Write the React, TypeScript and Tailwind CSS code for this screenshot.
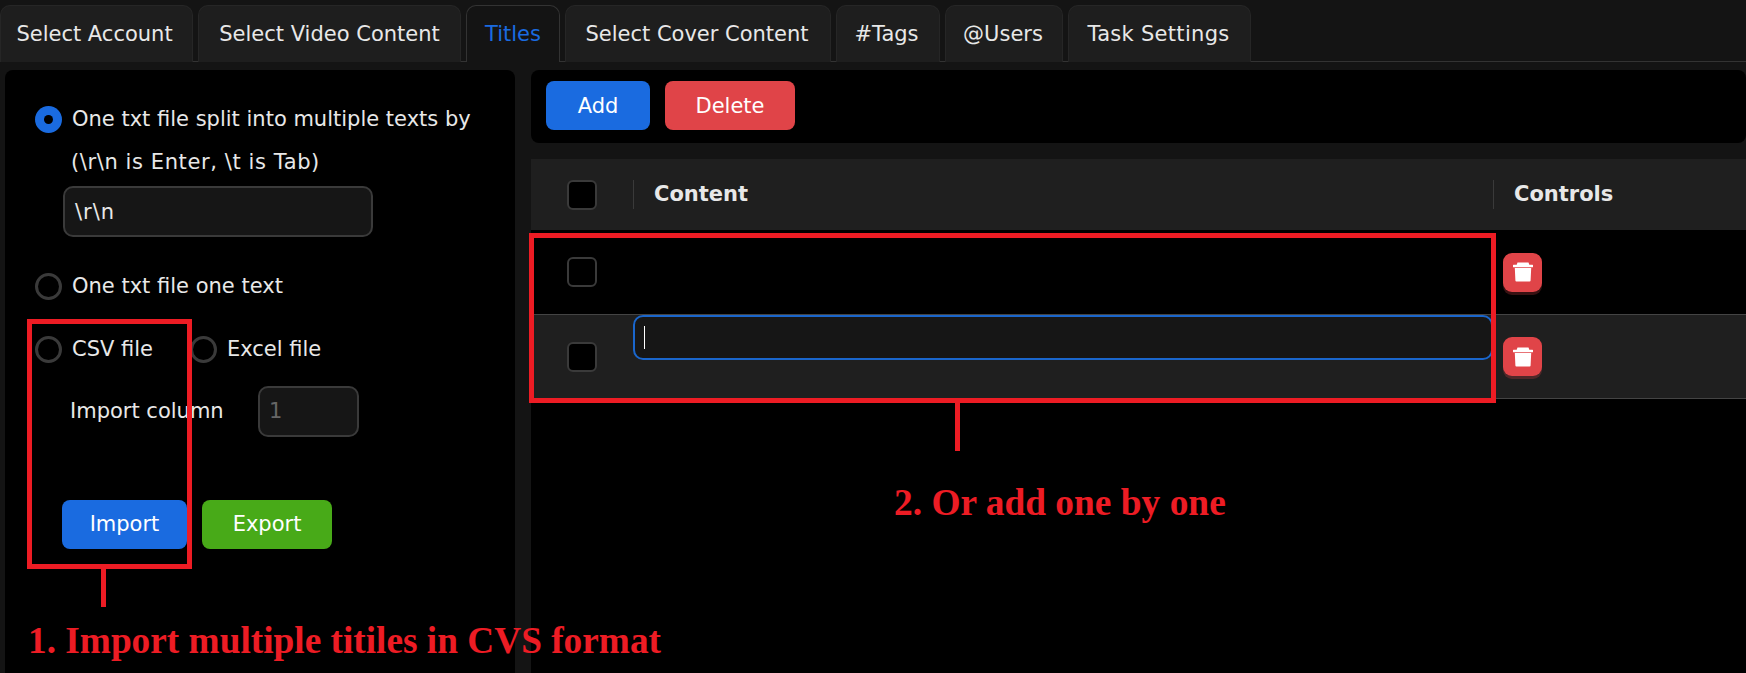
import React from "react";

const font = { fontFamily: '"DejaVu Sans", sans-serif' };

function Tab({ label, active, w }: { label: string; active?: boolean; w: string }) {
  return (
    <div className={`${w} h-[57px] shrink-0 -mb-px flex items-center justify-center rounded-t-[10px] border border-b-0 text-[21px] ${active ? "bg-[#141414] border-[#333] text-[#1a6be0]" : "bg-[#1e1e1e] border-[#262626] text-[#e8e8e8]"}`}>
      <span className="pt-[2px]">{label}</span>
    </div>
  );
}

function Radio({ on }: { on?: boolean }) {
  return on ? (
    <span className="w-[27px] h-[27px] shrink-0 rounded-full bg-[#1a6be0] flex items-center justify-center">
      <span className="w-[9px] h-[9px] rounded-full bg-black" />
    </span>
  ) : (
    <span className="w-[27px] h-[27px] shrink-0 rounded-full border-[3px] border-[#3a3a3a]" />
  );
}

function Check({ className = "" }: { className?: string }) {
  return <span className={`block w-[30px] h-[30px] rounded-[6px] bg-black border-2 border-[#3a3a3a] ${className}`} />;
}

function Trash() {
  return (
    <div className="w-[39px] h-[39px] rounded-[9px] bg-[#e04448] shadow-[0_3px_0_rgba(224,68,72,0.25)] flex items-center justify-center">
      <svg width="20" height="20" viewBox="0 0 20 20" fill="#fff">
        <path d="M4.5 0.5h11l.8 2.2H19.5a.5.5 0 0 1 .5.5v1.6a.5.5 0 0 1-.5.5H.5a.5.5 0 0 1-.5-.5V3.200a.5.5 0 0 1 .5-.5h3.200z" />
        <path d="M1.800 6h16.400l-.6 12.500a1 1 0 0 1-1 1H3.400a1 1 0 0 1-1-1z" />
      </svg>
    </div>
  );
}

export default function App() {
  return (
    <div className="relative w-[1746px] h-[673px] overflow-hidden bg-[#141414] text-[#e8e8e8]" style={font}>
      <div className="flex h-[62px] pt-[5px] gap-[5px] border-b border-[#333]">
        <Tab label="Select Account" w="w-[193px] pr-[4px]" />
        <Tab label="Select Video Content" w="w-[263px]" />
        <Tab label="Titles" active w="w-[94px]" />
        <Tab label="Select Cover Content" w="w-[266px] pr-[2px]" />
        <Tab label="#Tags" w="w-[104px] pr-[3px]" />
        <Tab label="@Users" w="w-[118px] pr-[2px]" />
        <Tab label="Task Settings" w="w-[183px] pr-[2px] tracking-[0.3px]" />
      </div>

      <div className="flex gap-[16px] pl-[5px] pt-[8px] h-[611px]">
        <div className="w-[510px] shrink-0 bg-black rounded-t-[8px] pl-[30px] pt-[28px] text-[21px]">
          <div className="flex items-center gap-[10px] h-[42px]">
            <Radio on />
            <span className="pt-[2px]">One txt file split into multiple texts by</span>
          </div>
          <div className="h-[42px] mt-[1px] pt-[2px] flex items-center pl-[36px] tracking-[0.6px]">(\r\n is Enter, \t is Tab)</div>
          <div className="ml-[28px] mt-[3px] w-[310px] h-[51px] rounded-[10px] border-2 border-[#3a3a3a] bg-[#161616] flex items-center pl-[10px] pt-[2px] tracking-[1px]">\r\n</div>
          <div className="flex items-center gap-[10px] h-[42px] mt-[28px]">
            <Radio />
            <span className="pt-[2px]">One txt file one text</span>
          </div>
          <div className="flex items-center h-[42px] mt-[21px]">
            <Radio />
            <span className="ml-[10px] w-[118px] pt-[2px]">CSV file</span>
            <Radio />
            <span className="ml-[10px] pt-[2px]">Excel file</span>
          </div>
          <div className="flex items-center mt-[16px] pl-[35px]">
            <span className="w-[188px]">Import column</span>
            <span className="w-[101px] h-[51px] rounded-[10px] border-2 border-[#3a3a3a] bg-[#161616] flex items-center pl-[9px] text-[#666]">1</span>
          </div>
          <div className="flex gap-[15px] mt-[63px] ml-[27px]">
            <div className="w-[125px] h-[49px] rounded-[8px] bg-[#1a6be0] text-white flex items-center justify-center">Import</div>
            <div className="w-[130px] h-[49px] rounded-[8px] bg-[#48aa18] text-white flex items-center justify-center">Export</div>
          </div>
        </div>

        <div className="flex-1 min-w-0 flex flex-col">
          <div className="h-[73px] shrink-0 bg-black rounded-[8px] flex items-start gap-[15px] pl-[15px] pt-[11px] text-[21px]">
            <div className="w-[104px] h-[49px] rounded-[8px] bg-[#1a6be0] text-white flex items-center justify-center pt-[2px]">Add</div>
            <div className="w-[130px] h-[49px] rounded-[8px] bg-[#e04448] text-white flex items-center justify-center pt-[2px]">Delete</div>
          </div>
          <div className="mt-[16px] flex-1 bg-black text-[21px]">
            <div className="h-[71px] bg-[#1f1f1f] flex items-center font-bold">
              <Check className="ml-[36px]" />
              <span className="ml-[36px] w-px h-[29px] bg-[#3a3a3a]" />
              <span className="ml-[20px] w-[839px]">Content</span>
              <span className="w-px h-[29px] bg-[#3a3a3a]" />
              <span className="ml-[20px]">Controls</span>
            </div>
            <div className="h-[85px] bg-black border-b border-[#444] flex items-center">
              <Check className="ml-[36px]" />
              <div className="ml-[906px]"><Trash /></div>
            </div>
            <div className="h-[84px] bg-[#1f1f1f] border-b border-[#444] flex items-center">
              <Check className="ml-[36px]" />
              <div className="ml-[36px] w-[860px] h-[45px] self-start rounded-[10px] border-2 border-[#1a66cc] bg-[#161616] flex items-center pl-[9px]">
                <span className="w-px h-[23px] bg-white" />
              </div>
              <div className="ml-[10px]"><Trash /></div>
            </div>
          </div>
        </div>
      </div>

      {/* Red annotations drawn over the screenshot */}
      <div className="absolute left-[27px] top-[319px] w-[165px] h-[250px] border-[5px] border-[#ed1c24]" />
      <div className="absolute left-[101px] top-[569px] w-[5px] h-[38px] bg-[#ed1c24]" />
      <div className="absolute left-[529px] top-[233px] w-[967px] h-[170px] border-[5px] border-[#ed1c24]" />
      <div className="absolute left-[955px] top-[403px] w-[5px] h-[48px] bg-[#ed1c24]" />
      <div className="absolute left-[28px] top-[619px] text-[37.3px] leading-[44px] font-bold text-[#ed1c24] whitespace-nowrap" style={{ fontFamily: '"Liberation Serif", serif' }}>1. Import multiple titiles in CVS format</div>
      <div className="absolute left-[894px] top-[481px] text-[37.4px] leading-[44px] font-bold text-[#ed1c24] whitespace-nowrap" style={{ fontFamily: '"Liberation Serif", serif' }}>2. Or add one by one</div>
    </div>
  );
}
